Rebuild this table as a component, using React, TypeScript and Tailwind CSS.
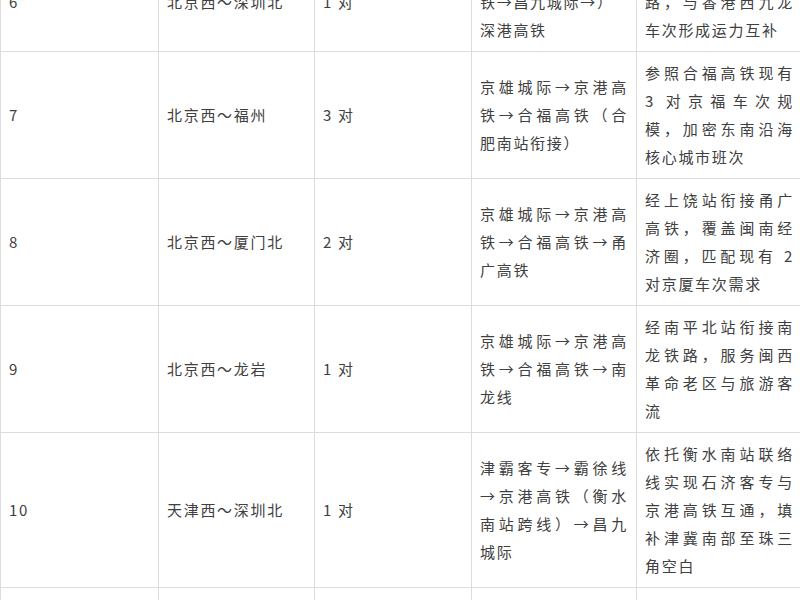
import React from "react";

type Row = {
  no: string;
  route: string;
  pairs: string;
  path: string[];
  note: string[];
  plain?: number[]; // indices of path lines not justified
};

const rows: Row[] = [
  {
    no: "6",
    route: "北京西～深圳北",
    pairs: "1 对",
    path: ["京雄城际→京港高", "铁→昌九城际→）", "深港高铁"],
    note: ["衔接广深港高速铁", "路，与香港西九龙", "车次形成运力互补"],
    plain: [1],
  },
  {
    no: "7",
    route: "北京西～福州",
    pairs: "3 对",
    path: ["京雄城际→京港高", "铁→合福高铁（合", "肥南站衔接）"],
    note: ["参照合福高铁现有", "3 对京福车次规", "模，加密东南沿海", "核心城市班次"],
  },
  {
    no: "8",
    route: "北京西～厦门北",
    pairs: "2 对",
    path: ["京雄城际→京港高", "铁→合福高铁→甬", "广高铁"],
    note: ["经上饶站衔接甬广", "高铁，覆盖闽南经", "济圈，匹配现有 2", "对京厦车次需求"],
  },
  {
    no: "9",
    route: "北京西～龙岩",
    pairs: "1 对",
    path: ["京雄城际→京港高", "铁→合福高铁→南", "龙线"],
    note: ["经南平北站衔接南", "龙铁路，服务闽西", "革命老区与旅游客", "流"],
  },
  {
    no: "10",
    route: "天津西～深圳北",
    pairs: "1 对",
    path: ["津霸客专→霸徐线", "→京港高铁（衡水", "南站跨线）→昌九", "城际"],
    note: ["依托衡水南站联络", "线实现石济客专与", "京港高铁互通，填", "补津冀南部至珠三", "角空白"],
  },
  {
    no: "11",
    route: "北京西～汕头",
    pairs: "1 对",
    path: ["京雄城际→京港高", "铁→合福高铁→甬", "广高铁"],
    note: ["经福州南站衔接福", "厦高铁与厦深高", "铁，服务粤东潮汕", "地区往返京津冀", "客流"],
  },
];

function Lines({ lines, plain = [] }: { lines: string[]; plain?: number[] }) {
  return (
    <>
      {lines.map((l, i) => {
        const justify = i < lines.length - 1 && !plain.includes(i);
        return (
          <div
            key={i}
            className={
              justify
                ? "whitespace-nowrap text-justify [text-align-last:justify]"
                : "whitespace-nowrap"
            }
          >
            {l}
          </div>
        );
      })}
    </>
  );
}

const cell =
  "flex flex-col justify-center border-r border-b border-[#dcdcdc] px-[8px] py-[7px]";

export default function App() {
  return (
    <div className="h-[600px] w-[800px] overflow-hidden bg-white">
      <div
        className="-mt-[48px] grid w-[803px] grid-cols-[158px_156px_157px_165px_166px] border-l border-t border-[#dcdcdc] text-[15px] leading-[28px] tracking-[1.7px] text-[#404040]"
        style={{ fontFamily: '"Noto Sans CJK SC", "Noto Sans", sans-serif' }}
      >
        {rows.map((r) => (
          <React.Fragment key={r.no}>
            <div className={cell}>{r.no}</div>
            <div className={cell}>{r.route}</div>
            <div className={cell}>{r.pairs}</div>
            <div className={cell}>
              <Lines lines={r.path} plain={r.plain} />
            </div>
            <div className={cell}>
              <Lines lines={r.note} />
            </div>
          </React.Fragment>
        ))}
      </div>
    </div>
  );
}
